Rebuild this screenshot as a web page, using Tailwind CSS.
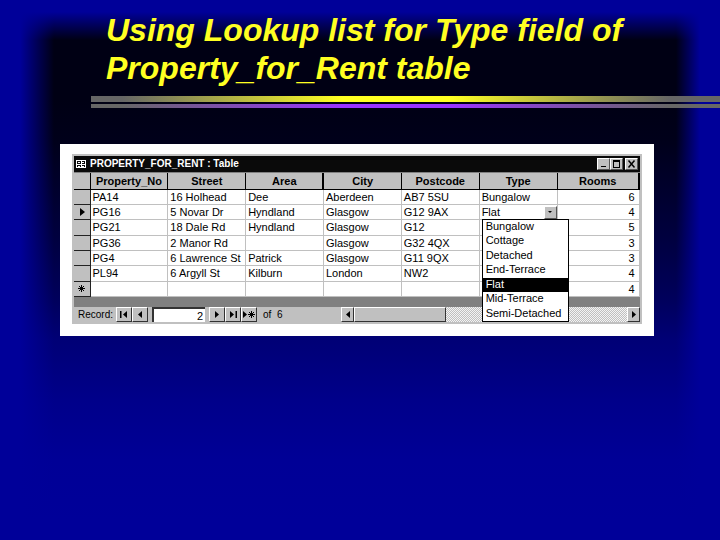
<!DOCTYPE html>
<html lang="en">
<head>
    <meta charset="UTF-8">
    <meta name="viewport" content="width=device-width, initial-scale=1.0">
    <title>Using Lookup list for Type field</title>
    <script src="https://cdn.jsdelivr.net/npm/@tailwindcss/browser@4"></script>
</head>
<body class="min-h-screen overflow-x-hidden bg-[#000099] bg-[linear-gradient(to_right,#000099_20px,#00009900_54px),linear-gradient(to_left,#000099_20px,#00009900_44px),linear-gradient(to_bottom,#000099_12px,#00009900_40px),linear-gradient(to_bottom,#000014_100px,#00001a_140px,#000040_240px,#00005c_300px,#000076_340px,#00008a_400px,#000096_460px,#000099_520px)] font-['Liberation_Sans',Arial,sans-serif]">
    <header class="pt-[11px]">
        <h1 class="pl-[106px] text-[32px] leading-[38px] font-bold italic text-[#ffff22]">Using Lookup list for Type field of<br>Property_for_Rent table</h1>
        <div class="mt-[9px] ml-[91px] flex flex-col gap-0.5">
            <div class="h-1.5 bg-[linear-gradient(to_right,#666666_5%,#ffff22_40%,#ffff22_57%,#666666_92%)]"></div>
            <div class="h-1 bg-[linear-gradient(to_right,#666666_5%,#9933ff_40%,#9933ff_57%,#666666_92%)]"></div>
        </div>
    </header>

    <main class="mt-9 mr-[66px] ml-[60px] bg-white pt-2.5 pr-3 pb-3 pl-3 text-[11px] leading-[14px] text-black">
        <section class="border-2 border-[#c0c0c0]">
            <!-- Title bar -->
            <div class="flex h-4 items-center bg-[#0a0a0a] pr-0.5 pl-0.5 text-white">
                <svg class="mr-1 h-2.5 w-2.5" viewBox="0 0 10 10" fill="none" stroke="white" shape-rendering="crispEdges"><path d="M0 1.500h10M.5 1v8M9.500 1v8M0 8.500h10M2 3.500h2M6 3.500h2M0 5.500h10M2 7.500h2M6 7.500h2M5 1v8"/></svg>
                <h2 class="flex-1 text-[10px] font-bold">PROPERTY_FOR_RENT : Table</h2>
                <div class="flex">
                    <button aria-label="Minimize" class="h-3 w-[13px] border border-t-white border-r-[#555] border-b-[#555] border-l-white bg-[#c0c0c0]"><svg class="h-full w-full" viewBox="0 0 11 10" fill="none" stroke="black" shape-rendering="crispEdges"><path d="M3 7.500h5"/></svg></button>
                    <button aria-label="Maximize" class="h-3 w-[13px] border border-t-white border-r-[#555] border-b-[#555] border-l-white bg-[#c0c0c0]"><svg class="h-full w-full" viewBox="0 0 11 10" fill="none" stroke="black" shape-rendering="crispEdges"><path d="M2.500 1.500h6v7h-6zM2 2.500h7"/></svg></button>
                    <button aria-label="Close" class="ml-0.5 h-3 w-[13px] border border-t-white border-r-[#555] border-b-[#555] border-l-white bg-[#c0c0c0]"><svg class="h-full w-full" viewBox="0 0 11 10" fill="none" stroke="black" stroke-width="1.500"><path d="M2.500 1.500l6 7M8.500 1.500l-6 7"/></svg></button>
                </div>
            </div>

            <!-- Datasheet -->
            <div class="bg-[#808080] pt-px pb-2.5">
                <table class="h-[124px] w-full table-fixed border-collapse bg-white">
                    <colgroup>
                        <col class="w-4"><col><col><col><col><col><col><col class="w-[82px]">
                    </colgroup>
                    <thead>
                        <tr class="h-4 bg-[#c0c0c0] text-center">
                            <th class="border-r border-b border-black"></th>
                            <th class="border-r border-b border-black p-0">Property_No</th>
                            <th class="border-r border-b border-black p-0">Street</th>
                            <th class="border-r-2 border-b border-black p-0">Area</th>
                            <th class="border-r border-b border-black p-0">City</th>
                            <th class="border-r border-b border-black p-0">Postcode</th>
                            <th class="border-r border-b border-black p-0">Type</th>
                            <th class="border-r-2 border-b border-black p-0">Rooms</th>
                        </tr>
                    </thead>
                    <tbody class="[&_td]:border-r [&_td]:border-b [&_td]:border-[#c0c0c0] [&_td]:py-0 [&_td]:pl-0.5 [&_td]:whitespace-nowrap [&_th]:border-r [&_th]:border-b [&_th]:border-[#222] [&_th]:bg-[#c0c0c0] [&_th]:p-0">
                        <tr><th></th><td>PA14</td><td>16 Holhead</td><td>Dee</td><td>Aberdeen</td><td>AB7 5SU</td><td>Bungalow</td><td class="pr-1 text-right">6</td></tr>
                        <tr>
                            <th><svg class="mx-auto h-2 w-1.5" viewBox="0 0 6 8"><path d="M1 0l5 4-5 4z"/></svg></th>
                            <td>PG16</td><td>5 Novar Dr</td><td>Hyndland</td><td>Glasgow</td><td>G12 9AX</td>
                            <td class="pr-0">
                                <div class="relative flex h-[14px] items-center justify-between">
                                    <label for="type">Flat</label>
                                    <button aria-label="Show types" class="flex h-[13px] w-[13px] items-center justify-center border border-t-white border-r-[#555] border-b-[#555] border-l-white bg-[#c0c0c0]"><svg class="h-0.5 w-1" viewBox="0 0 4 2"><path d="M0 0h4l-2 2z"/></svg></button>
                                    <select id="type" size="7" class="absolute top-full left-0 z-10 h-[103px] w-[87px] appearance-none overflow-hidden border border-black bg-white p-0 text-[11px] leading-[14px]">
                                        <option class="h-[14px] min-h-0 bg-white p-0 pl-[3px] text-black even:h-[15px]">Bungalow</option>
                                        <option class="h-[14px] min-h-0 bg-white p-0 pl-[3px] text-black even:h-[15px]">Cottage</option>
                                        <option class="h-[14px] min-h-0 bg-white p-0 pl-[3px] text-black even:h-[15px]">Detached</option>
                                        <option class="h-[14px] min-h-0 bg-white p-0 pl-[3px] text-black even:h-[15px]">End-Terrace</option>
                                        <option selected class="h-[14px] min-h-0 bg-black bg-[linear-gradient(black,black)] p-0 pl-[3px] text-white checked:text-white even:h-[15px]">Flat</option>
                                        <option class="h-[14px] min-h-0 bg-white p-0 pl-[3px] text-black even:h-[15px]">Mid-Terrace</option>
                                        <option class="h-[14px] min-h-0 bg-white p-0 pl-[3px] text-black even:h-[15px]">Semi-Detached</option>
                                    </select>
                                </div>
                            </td>
                            <td class="pr-1 text-right">4</td>
                        </tr>
                        <tr><th></th><td>PG21</td><td>18 Dale Rd</td><td>Hyndland</td><td>Glasgow</td><td>G12</td><td></td><td class="pr-1 text-right">5</td></tr>
                        <tr><th></th><td>PG36</td><td>2 Manor Rd</td><td></td><td>Glasgow</td><td>G32 4QX</td><td></td><td class="pr-1 text-right">3</td></tr>
                        <tr><th></th><td>PG4</td><td>6 Lawrence St</td><td>Patrick</td><td>Glasgow</td><td>G11 9QX</td><td></td><td class="pr-1 text-right">3</td></tr>
                        <tr><th></th><td>PL94</td><td>6 Argyll St</td><td>Kilburn</td><td>London</td><td>NW2</td><td></td><td class="pr-1 text-right">4</td></tr>
                        <tr>
                            <th><svg class="mx-auto h-[7px] w-[7px]" viewBox="0 0 7 7" stroke="black"><path d="M3.500 0v7M0 3.500h7M1 1l5 5M6 1L1 6"/></svg></th>
                            <td></td><td></td><td></td><td></td><td></td><td></td><td class="pr-1 text-right">4</td>
                        </tr>
                    </tbody>
                </table>
            </div>

            <!-- Record navigation -->
            <div class="flex h-[15px] items-stretch bg-[#c0c0c0]">
                <div class="flex w-[267px] shrink-0 items-stretch">
                    <label for="record" class="w-[42px] pl-1 text-[10px] leading-4">Record:</label>
                    <button aria-label="First record" class="flex w-4 items-center justify-center border border-t-white border-r-[#333] border-b-[#333] border-l-white"><svg class="h-[7px] w-2" viewBox="0 0 8 7"><path d="M0 0h1.500v7H0zM7 0v7L3 3.500z"/></svg></button>
                    <button aria-label="Previous record" class="flex w-4 items-center justify-center border border-t-white border-r-[#333] border-b-[#333] border-l-white"><svg class="h-[7px] w-1" viewBox="0 0 4 7"><path d="M4 0v7L0 3.500z"/></svg></button>
                    <input id="record" type="text" value="2" class="mx-1 w-[53px] border-t-2 border-l-2 border-[#333] bg-white px-0.5 text-right text-[11px]">
                    <button aria-label="Next record" class="flex w-4 items-center justify-center border border-t-white border-r-[#333] border-b-[#333] border-l-white"><svg class="h-[7px] w-1" viewBox="0 0 4 7"><path d="M0 0v7l4-3.500z"/></svg></button>
                    <button aria-label="Last record" class="flex w-4 items-center justify-center border border-t-white border-r-[#333] border-b-[#333] border-l-white"><svg class="h-[7px] w-2" viewBox="0 0 8 7"><path d="M1 0v7l4-3.500zM6.500 0H8v7H6.500z"/></svg></button>
                    <button aria-label="New record" class="flex w-4 items-center justify-center border border-t-white border-r-[#333] border-b-[#333] border-l-white"><svg class="h-[7px] w-3" viewBox="0 0 12 7"><path d="M0 0v7l4-3.500z"/><path stroke="black" d="M8.500 0v7M5 3.500h7M6 1l5 5M11 1L6 6"/></svg></button>
                    <span class="pl-1.5 text-[10px] leading-4">of&nbsp; 6</span>
                </div>
                <div class="flex flex-1 items-stretch bg-[repeating-conic-gradient(#c0c0c0_0_25%,#f4f4f4_0_50%)] bg-size-[2px_2px]">
                    <button aria-label="Scroll left" class="flex w-[13px] items-center justify-center border border-t-white border-r-[#333] border-b-[#333] border-l-white bg-[#c0c0c0]"><svg class="h-[7px] w-1" viewBox="0 0 4 7"><path d="M4 0v7L0 3.500z"/></svg></button>
                    <div class="w-[92px] border border-t-white border-r-[#333] border-b-[#333] border-l-white bg-[#c0c0c0]"></div>
                    <button aria-label="Scroll right" class="ml-auto flex w-[13px] items-center justify-center border border-t-white border-r-[#333] border-b-[#333] border-l-white bg-[#c0c0c0]"><svg class="h-[7px] w-1" viewBox="0 0 4 7"><path d="M0 0v7l4-3.500z"/></svg></button>
                </div>
            </div>
        </section>
    </main>
</body>
</html>
